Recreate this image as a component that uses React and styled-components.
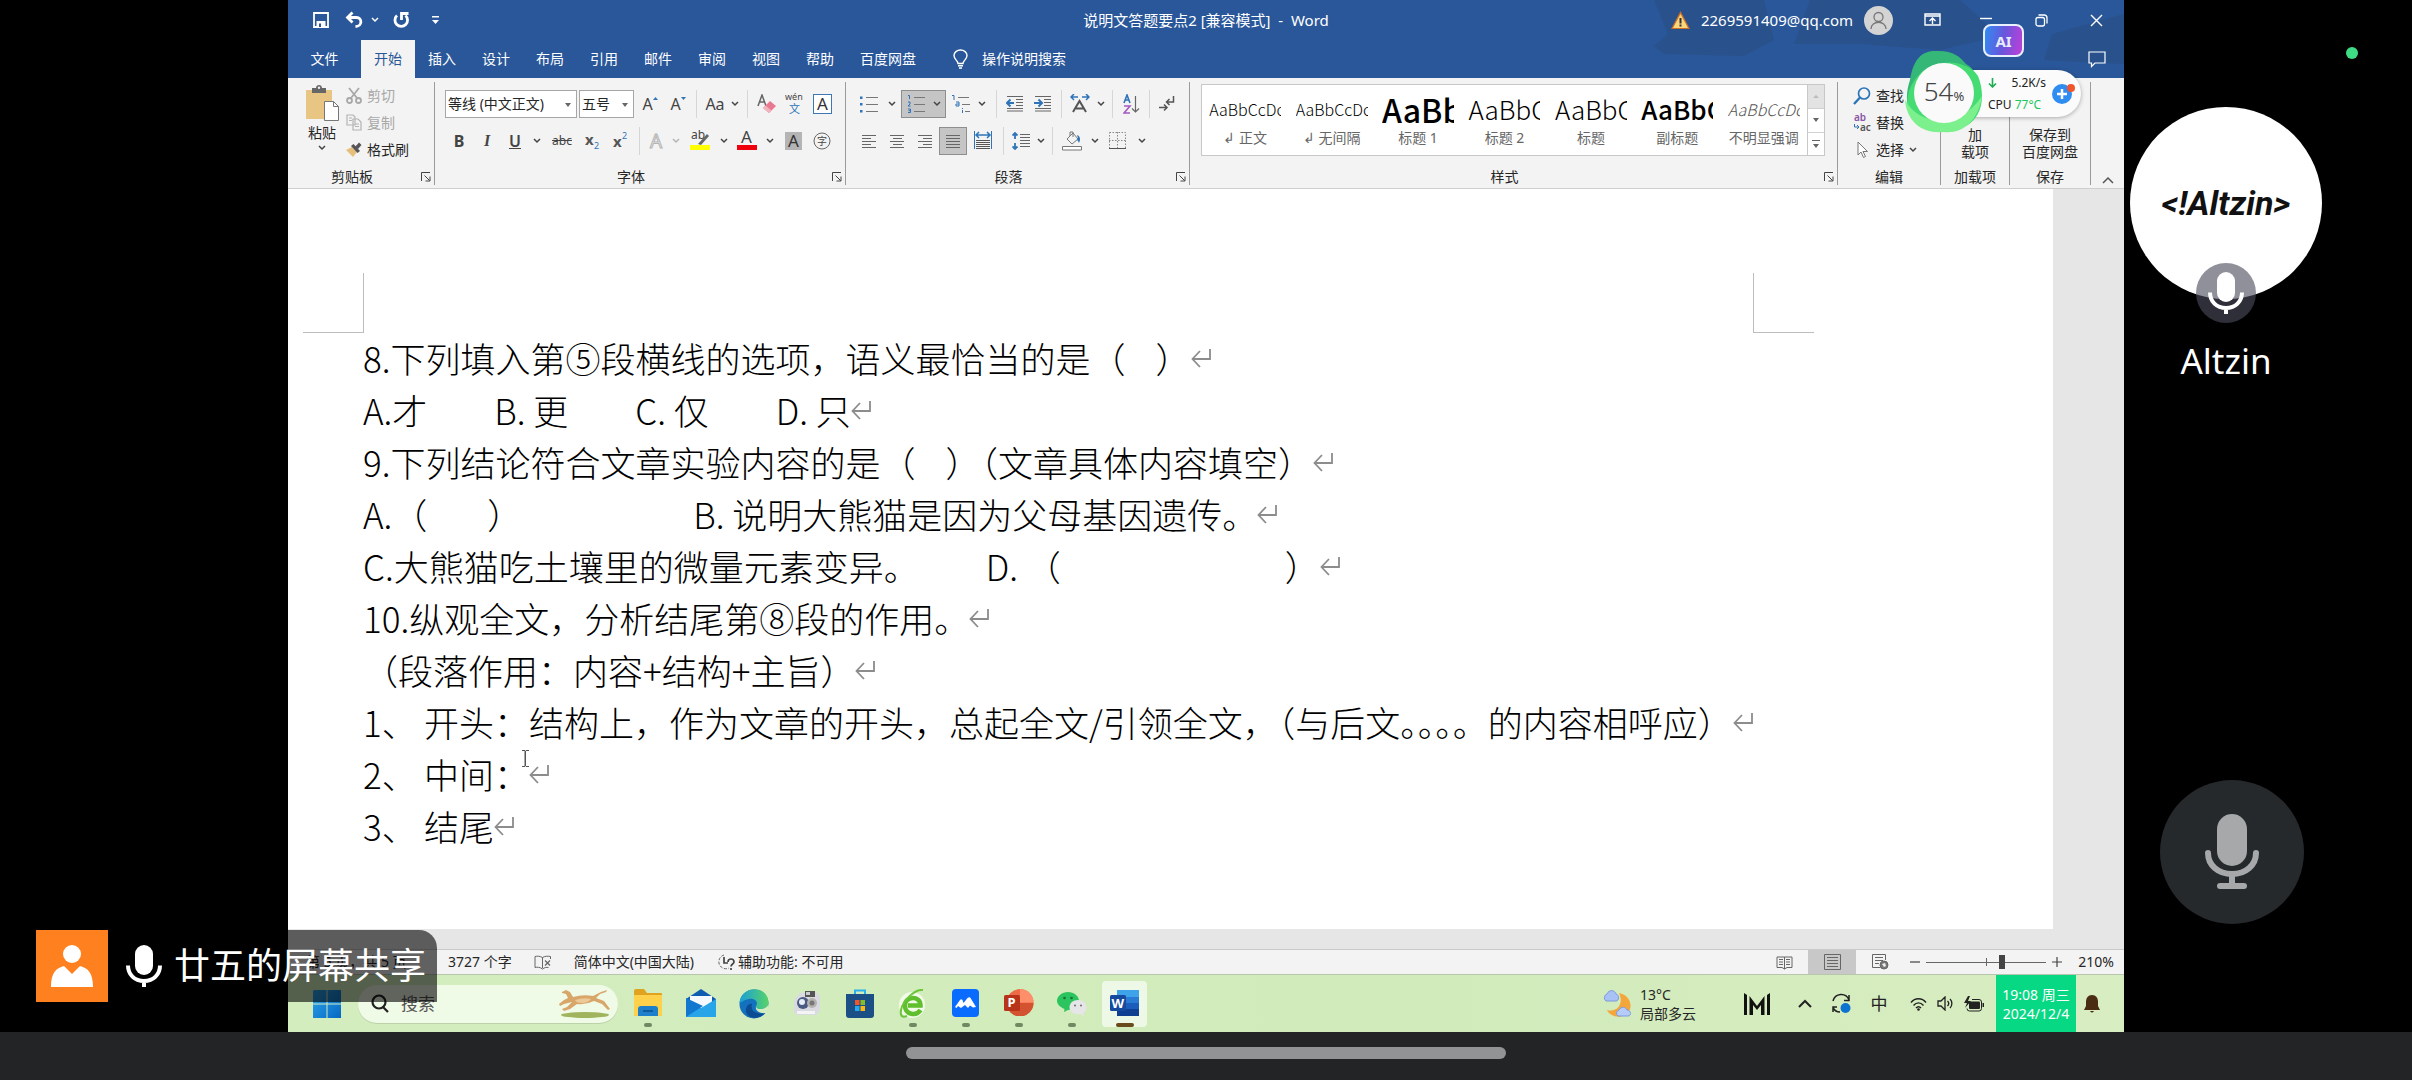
import React from "react";
import styled, { createGlobalStyle, css } from "styled-components";

const GlobalStyle = createGlobalStyle`
  * { box-sizing: border-box; }
  body {
    margin: 0;
    background: #000;
    color: #262626;
    font-family: "Noto Sans", "Noto Sans CJK SC", sans-serif;
    font-size: 14px;
    line-height: 18px;
  }
  button, input, select {
    margin: 0;
    padding: 0;
    border: 0;
    background: none;
    color: inherit;
    font: inherit;
  }
  svg { display: block; flex: none; }
  p, h1, h2 { margin: 0; font: inherit; }
`;

/* ---------- layout ---------- */

const Page = styled.div`
  display: grid;
  grid-template-rows: 1fr 48px;
  height: 100vh;
`;

const Call = styled.main`
  position: relative;
  display: grid;
  grid-template-columns: 288px 1fr 288px;
  min-height: 0;
`;

const Screen = styled.section`
  position: relative;
  grid-column: 2;
  display: flex;
  flex-direction: column;
  min-width: 0;
  background: #e6e6e6;
`;

const NavBar = styled.footer`
  display: flex;
  align-items: flex-start;
  justify-content: center;
  padding-top: 15px;
  background: #222426;
`;

const NavHandle = styled.div`
  width: 600px;
  height: 12px;
  border-radius: 6px;
  background: #929394;
`;

/* ---------- title bar ---------- */

const Header = styled.header`
  position: relative;
  height: 78px;
  background: #2a5799;
  color: #fff;
`;

const Backdrop = styled.svg`
  position: absolute;
  top: 0;
  right: 0;
`;

const TitleRow = styled.div`
  position: relative;
  display: grid;
  grid-template-columns: 1fr auto 1fr;
  align-items: center;
  height: 40px;
`;

const QuickAccess = styled.div`
  display: flex;
  align-items: center;
  padding-left: 18px;
`;

const TitleText = styled.h1`
  font-size: 15px;
  white-space: pre;
`;

const Account = styled.div`
  display: flex;
  align-items: center;
  justify-content: flex-end;
  gap: 11px;
`;

const Email = styled.span`
  font-size: 15px;
`;

const WindowButtons = styled.div`
  display: flex;
  padding-left: 2px;
`;

const TabRow = styled.nav`
  position: relative;
  display: flex;
  align-items: stretch;
  height: 38px;
`;

const Tab = styled.button`
  min-width: ${p => (p.$first ? 73 : 54)}px;
  padding: 0 13px;
  ${p => p.$active && css`
    background: #f3f3f3;
    color: #2a5799;
  `}
`;

const TellMe = styled.button`
  display: flex;
  align-items: center;
  gap: 14px;
  padding: 0 0 0 24px;
`;

const CommentButton = styled.button`
  margin-left: auto;
  padding: 0 18px 0 0;
`;

/* ---------- ribbon ---------- */

const Ribbon = styled.div`
  display: flex;
  height: 111px;
  padding-top: 4px;
  border-bottom: 1px solid #cfcfcf;
  background: #f3f3f3;
`;

const GroupBox = styled.section`
  display: flex;
  flex-direction: column;
  width: ${p => p.$w}px;
  flex: ${p => (p.$grow ? "1 1 0" : "none")};
  height: 103px;
  min-width: 0;
  border-right: 1px solid #9b9b9b;
`;

const GroupBody = styled.div`
  display: flex;
  flex-direction: ${p => (p.$column ? "column" : "row")};
  flex: 1;
  padding: ${p => p.$pad || "0"};
`;

const GroupFoot = styled.div`
  display: grid;
  grid-template-columns: ${p => (p.$launcher ? "1fr 18px" : "1fr")};
  align-items: center;
  height: 16px;
  text-align: center;
  line-height: 16px;

  svg {
    justify-self: end;
    margin-right: 3px;
  }
`;

const FootLabel = styled.h2`
  white-space: nowrap;
`;

const Tool = styled.button`
  display: flex;
  align-items: center;
  justify-content: center;
  gap: ${p => p.$gap || 0}px;
  width: ${p => p.$w || 28}px;
  height: 28px;
  color: #555;
  ${p => p.$on && css`
    border: 1px solid #8e8e8e;
    background: #c5c5c5;
  `}
`;

const ToolRow = styled.div`
  display: flex;
  align-items: center;
  height: 37px;
`;

const Divider = styled.i`
  width: 1px;
  height: 28px;
  margin: 0 4px;
  background: #d6d6d6;
`;

const Combo = styled.label`
  position: relative;
  width: ${p => p.$w}px;
  height: 28px;
  margin-right: 2px;
  border: 1px solid #a6a6a6;
  background: #fff;

  select {
    width: 100%;
    height: 26px;
    padding-left: 2px;
    appearance: none;
    line-height: 26px;
  }
  svg {
    position: absolute;
    top: 12px;
    right: 5px;
    pointer-events: none;
  }
`;

const Glyph = styled.span`
  color: ${p => p.$c || "#444"};
  font-size: ${p => p.$s || 16}px;
  font-weight: ${p => p.$b || 400};
  font-style: ${p => (p.$i ? "italic" : "normal")};
  font-family: ${p => (p.$serif ? '"Liberation Serif", serif' : "inherit")};
  text-decoration: ${p => p.$deco || "none"};
  white-space: nowrap;
`;

const PasteButton = styled.button`
  display: flex;
  flex-direction: column;
  align-items: center;
  width: 48px;
  padding-top: 3px;
  gap: 3px;
`;

const SmallButtons = styled.div`
  display: flex;
  flex-direction: column;
`;

const SmallButton = styled.button`
  display: flex;
  align-items: center;
  gap: 5px;
  height: 27px;
  color: ${p => (p.$off ? "#a8a8a8" : "#262626")};
`;

const StackButton = styled.button`
  align-self: flex-end;
  width: 100%;
  padding-bottom: 9px;
  line-height: 17px;
`;

const Gallery = styled.div`
  display: flex;
  width: 100%;
  height: 72px;
  border: 1px solid #c8c8c8;
  background: #fff;
`;

const StyleItem = styled.button`
  display: flex;
  flex: 1 1 0;
  flex-direction: column;
  align-items: center;
  min-width: 0;
  color: #666;
`;

const Sample = styled.span`
  display: block;
  width: 72px;
  height: 44px;
  overflow: hidden;
  color: ${p => p.$c || "#000"};
  font-family: "Noto Sans CJK SC", sans-serif;
  font-size: ${p => p.$s || 16}px;
  font-weight: ${p => p.$b || 300};
  font-style: ${p => (p.$i ? "italic" : "normal")};
  line-height: 48px;
  text-align: left;
  white-space: nowrap;
`;

const GalleryScroll = styled.div`
  display: grid;
  grid-template-rows: 1fr 1fr 1fr;
  width: 17px;
  border-left: 1px solid #c8c8c8;
`;

const ScrollButton = styled.button`
  display: flex;
  align-items: center;
  justify-content: center;
  border-top: ${p => (p.$off ? 0 : 1)}px solid #d0d0d0;
  background: ${p => (p.$off ? "#e3e3e3" : "#fff")};
`;

const CollapseButton = styled.button`
  display: flex;
  align-items: flex-end;
  justify-content: center;
  width: 33px;
  padding-bottom: 4px;
`;

/* ---------- document ---------- */

const Paper = styled.article`
  position: relative;
  flex: 1;
  min-height: 0;
  margin: 0 71px 0 0;
  padding-top: 84px;
  overflow: hidden;
  background: #fff;
  color: #000;
`;

const CropMarks = styled.div`
  display: flex;
  justify-content: space-between;
  padding: 0 239px 0 15px;
`;

const CropMark = styled.i`
  width: 61px;
  height: 60px;
  border: 0 solid #bdbdbd;
  border-bottom-width: 1px;
  border-left-width: ${p => (p.$right ? 1 : 0)}px;
  border-right-width: ${p => (p.$right ? 0 : 1)}px;
`;

const Line = styled.p`
  display: flex;
  align-items: center;
  height: 52px;
  padding: 0 0 2px 75px;
  font-family: "Noto Sans CJK SC", sans-serif;
  font-size: 35px;
  font-weight: 300;
  line-height: 50px;
  white-space: pre;
`;

const Gap = styled.span`
  width: ${p => p.$w}px;
`;

const Marker = styled.span`
  width: 61px;
`;

const Caret = styled.svg`
  position: absolute;
  top: 561px;
  left: 233px;
`;

const ScrollStrip = styled.div`
  height: 20px;
`;

/* ---------- status bar ---------- */

const StatusBar = styled.div`
  display: flex;
  align-items: center;
  height: 26px;
  padding: 0 10px 0 18px;
  border-top: 1px solid #c9c9c9;
  border-bottom: 1px solid #b9c6ae;
  background: #f3f3f3;
`;

const PageCount = styled.span`
  width: 142px;
`;

const StatusItem = styled.button`
  display: flex;
  align-items: center;
  gap: 2px;
  margin-right: ${p => p.$gap || 22}px;
  white-space: nowrap;
`;

const Views = styled.div`
  display: flex;
  align-self: stretch;
  margin-left: auto;
`;

const ViewButton = styled.button`
  display: flex;
  align-items: center;
  justify-content: center;
  width: 48px;
  background: ${p => (p.$on ? "#c8c8c8" : "transparent")};
`;

const ZoomBox = styled.div`
  display: flex;
  align-items: center;
  gap: 6px;
  padding-left: 6px;
`;

const ZoomSlider = styled.input`
  width: 120px;
  height: 16px;
  appearance: none;
  background:
    linear-gradient(#666, #666) center / 1px 8px no-repeat,
    linear-gradient(#666, #666) center / 100% 1px no-repeat;

  &::-webkit-slider-thumb {
    width: 6px;
    height: 14px;
    appearance: none;
    background: #444;
  }
`;

const ZoomValue = styled.output`
  width: 46px;
  text-align: right;
`;

/* ---------- task bar ---------- */

const TaskBar = styled.div`
  display: flex;
  align-items: center;
  height: 57px;
  padding: 0 22px 0 22px;
  background: linear-gradient(90deg, #d3edbf, #d1ebba 60%, #d8edc2);
`;

const SearchBox = styled.label`
  display: flex;
  align-items: center;
  width: 260px;
  height: 38px;
  margin: 0 3px 0 14px;
  padding: 0 5px 0 13px;
  border-radius: 19px;
  background: #effae7;
  box-shadow: 0 1px 0 #bcd3aa;

  input {
    flex: 1;
    min-width: 0;
    padding-left: 12px;
    font-size: 17px;
    outline: 0;
  }
  input::placeholder { color: #555; }
`;

const AppButton = styled.button`
  display: flex;
  flex-direction: column;
  align-items: center;
  width: 45px;
  height: 46px;
  margin: 0 4px;
  padding-top: 8px;
  border-radius: 4px;
  background: ${p => (p.$on ? "#eef8e6" : "transparent")};

  &::after {
    content: "";
    width: ${p => (p.$on ? 18 : p.$open ? 8 : 0)}px;
    height: 4px;
    margin-top: auto;
    border-radius: 2px;
    background: ${p => (p.$on ? "#6b4a1c" : "#6f8a62")};
  }
`;

const Tray = styled.div`
  display: flex;
  align-items: center;
  align-self: stretch;
  margin-left: auto;
`;

const Weather = styled.button`
  display: flex;
  align-items: center;
  gap: 8px;
  margin-right: 36px;
  line-height: 19px;
  text-align: left;
`;

const TrayButton = styled.button`
  display: flex;
  align-items: center;
  justify-content: center;
  width: ${p => p.$w}px;
  height: 40px;
  color: #222;
  font-size: 17px;
`;

const Clock = styled.button`
  align-self: stretch;
  width: 80px;
  margin: 0 6px 0 8px;
  background: #07d883;
  color: #fff;
  line-height: 19px;
`;

/* ---------- things that float over the shared screen ---------- */

const AiBadge = styled.button`
  position: absolute;
  top: 24px;
  right: 100px;
  width: 41px;
  height: 33px;
  border: 2px solid #e9f0ff;
  border-radius: 8px;
  background: linear-gradient(100deg, #2f8df0, #6a55dc 50%, #c03fd8);
  color: #e4edff;
  font-weight: 700;
  font-size: 15px;
`;

const Monitor = styled.div`
  position: absolute;
  top: 70px;
  right: 43px;
  display: flex;
  align-items: center;
  width: 137px;
  height: 47px;
  padding: 0 6px 0 44px;
  border-radius: 24px;
  background: #fbfbfb;
  box-shadow: 0 1px 4px rgba(0, 0, 0, 0.3);
  color: #222;
  font-size: 12px;
`;

const MonitorRing = styled.div`
  position: absolute;
  top: -20px;
  left: -40px;
`;

const MonitorValue = styled.div`
  position: absolute;
  top: 13px;
  left: 10px;
  display: flex;
  align-items: baseline;
  justify-content: center;
  width: 60px;
  height: 60px;
  border-radius: 30px;
  background: #fafafa;
  color: #444;
  font-size: 26px;
  font-weight: 300;
  line-height: 56px;

  small { font-size: 13px; font-weight: 400; }
`;

const Stats = styled.div`
  flex: 1;
  line-height: 22px;
  white-space: nowrap;

  div {
    display: flex;
    align-items: center;
    justify-content: space-between;
    width: 58px;
  }
  b { color: #1cc75c; font-weight: 400; }
`;

const ShareBanner = styled.div`
  position: absolute;
  bottom: 30px;
  left: 36px;
  display: flex;
  align-items: center;
  height: 72px;
  padding-right: 11px;
  border-radius: 0 18px 0 0;
  background: rgba(0, 0, 0, 0.6);
  color: #fff;
  font-size: 36px;
  line-height: 72px;
`;

const HostBadge = styled.div`
  display: flex;
  align-items: center;
  justify-content: center;
  width: 72px;
  height: 72px;
  margin-right: 18px;
  background: #ff801f;
`;

const ShareText = styled.span`
  padding-left: 12px;
`;

/* ---------- participants ---------- */

const Side = styled.aside`
  display: flex;
  flex-direction: column;
  padding-bottom: 108px;
`;

const CameraDot = styled.i`
  align-self: flex-end;
  width: 12px;
  height: 12px;
  margin: 47px 54px 48px 0;
  border-radius: 6px;
  background: #3ddc84;
`;

const Participant = styled.figure`
  display: flex;
  flex-direction: column;
  align-items: center;
  width: 192px;
  margin: 0 0 0 6px;
  color: #fff;
`;

const Avatar = styled.div`
  position: relative;
  display: flex;
  align-items: center;
  justify-content: center;
  width: 192px;
  height: 192px;
  border-radius: 96px;
  background: #fff;
  color: #111;
  font-family: Roboto, "Noto Sans", sans-serif;
  font-size: 34px;
  font-weight: 700;
  font-style: italic;
`;

const AvatarMic = styled.span`
  position: absolute;
  bottom: -24px;
  left: 66px;
  display: flex;
  align-items: center;
  justify-content: center;
  width: 60px;
  height: 60px;
  border-radius: 30px;
  background: rgba(74, 76, 92, 0.62);
`;

const Name = styled.figcaption`
  margin-top: 34px;
  font-size: 35px;
  line-height: 56px;
`;

const MicButton = styled.button`
  display: flex;
  align-items: center;
  justify-content: center;
  width: 144px;
  height: 144px;
  margin: auto 0 0 36px;
  border-radius: 72px;
  background: #25292b;
`;

/* ---------- icons ---------- */

const BLUE = "#2f74b8";

function Icon({ w = 18, h = w, vb, s = "none", f = "none", sw = 1, children }) {
  return (
    <svg width={w} height={h} viewBox={vb || `0 0 ${w} ${h}`} fill={f} stroke={s} strokeWidth={sw} aria-hidden="true">
      {children}
    </svg>
  );
}

const Chevron = ({ c = "#444", w = 8 }) => (
  <Icon w={w} h={6} vb="0 0 8 6" s={c} sw={1.5}><path d="M1 1l3 3 3-3" /></Icon>
);

const Triangle = ({ c = "#666" }) => <Icon w={6} h={4} f={c}><path d="M0 0h6l-3 4z" /></Icon>;

const Launcher = () => (
  <Icon w={10} s="#444"><path d="M.5 9V.5H9M3.500 3.500l5 5M9 4.500V9H4.500" /></Icon>
);

const Return = () => (
  <Icon w={21} h={20} s="#8c8c8c" sw={1.8}><path d="M19 1v10H2M9 3l-7.500 8 7.500 8" /></Icon>
);

const Mic = ({ w, h, c = "#fff" }) => (
  <Icon w={w} h={h} vb="0 0 36 42" s={c} sw={4}>
    <rect x="9" y="0" width="18" height="30" rx="9" fill={c} stroke="none" />
    <path d="M2 20.500c0 9 6.500 15.500 16 15.500s16-6.500 16-15.500M18 36v6" />
  </Icon>
);

const lines = (rows, x1, x2, y0 = 3, step = 4) =>
  Array.from({ length: rows }, (_, i) => `M${x1} ${y0 + i * step}H${x2}`).join("");

const Save = () => (
  <Icon w={16} s="#fff" sw={1.8}>
    <path d="M1 1h14v14H1z" /><path d="M3.500 9h9v6h-9z" fill="#fff" stroke="none" /><path d="M6 11.500h2V15H6z" fill="#2a5799" stroke="none" />
  </Icon>
);
const Undo = () => (
  <Icon w={18} s="#fff" sw={2.8}><path d="M7.500 1.500L2.500 6.500l5 5M3 6.500h8.500c6 0 6 9-1 9" /></Icon>
);
const Redo = () => (
  <Icon w={18} s="#fff" sw={2.8}><path d="M5 4.500a6.300 6.300 0 1 0 8.500 0M9.500 9V2.500H16.500" /></Icon>
);
const Customize = () => (
  <Icon w={7} h={8} f="#fff"><path d="M0 0h7v1.500H0zM0 4h7L3.500 8z" /></Icon>
);
const Warning = () => (
  <Icon w={19} h={18} f="#f0b040"><path d="M9.500 0L19 18H0z" fill="#c86f28" /><path d="M9.500 3L17 17H2z" fill="#fbd67a" /><path d="M8.500 7h2v5.500h-2zM8.500 13.500h2v2h-2z" fill="#333" /></Icon>
);
const User = () => (
  <Icon w={29} f="#d4d4d4"><circle cx="14.500" cy="14.500" r="14.500" /><circle cx="14.500" cy="11" r="4.500" stroke="#777" strokeWidth="1.300" /><path d="M7 23c0-9 15-9 15 0" stroke="#777" strokeWidth="1.300" /></Icon>
);
const RibbonToggle = () => (
  <Icon w={17} h={14} s="#fff" sw={1.4}><path d="M1 1h15v11H1zM1 3h15M8.500 11V5M5.500 8l3-3 3 3" /></Icon>
);
const Minimize = () => <Icon w={12} h={12} s="#fff" sw={1.4}><path d="M0 4.500h12" /></Icon>;
const Restore = () => (
  <Icon w={13} s="#fff" sw={1.3}><rect x="1" y="3.500" width="8.500" height="8.500" rx="2" /><path d="M3.500 1H9a3 3 0 0 1 3 3v5.500" /></Icon>
);
const Close = () => <Icon w={13} s="#fff" sw={1.4}><path d="M1 1l11 11M12 1L1 12" /></Icon>;
const Comment = () => <Icon w={18} h={17} s="#fff" sw={1.2}><path d="M1 1h16v11H7l-3.500 3.500V12H1z" /></Icon>;
const Bulb = () => (
  <Icon w={15} h={20} s="#fff" sw={1.4}><path d="M5 14.500c0-3-4-4-4-8a6.500 5.500 0 0 1 13 0c0 4-4 5-4 8zM5 16.700h5M6 19h3" /></Icon>
);

const Paste = () => (
  <Icon w={34} h={36} f="#e9c583">
    <path d="M1 5h26v29H1z" /><path d="M7 3h4c0-4 6-4 6 0h4v5H7z" fill="#666" /><circle cx="14" cy="2.800" r="1.200" fill="#eee" />
    <path d="M19.500 16.500h9l5 5v14h-14z" fill="#fff" stroke="#777" /><path d="M28.500 16.500v5h5" stroke="#777" fill="none" />
  </Icon>
);
const Cut = () => (
  <Icon w={16} h={17} s="#a8a8a8" sw={1.8}><path d="M3 1l8 10M13 1L5 11" /><circle cx="3.500" cy="13.500" r="2.500" /><circle cx="12.500" cy="13.500" r="2.500" /></Icon>
);
const Copy = () => (
  <Icon w={16} h={17} s="#b4b4b4" sw={1.2}><path d="M1 1h6l2 2v8H1zM7 5h5l3 3v8H7zM3 4h3M3 6.500h3M9 10h4M9 12.500h4" /></Icon>
);
const Brush = () => (
  <Icon w={16} h={16}><path d="M0 8l6-3 5 5-4 5z" fill="#e6bf7d" /><path d="M5 4l2.500-2L14 9l-2.500 2z" fill="#555" /><path d="M9 5l4-4.500L15.500 3 12 7z" fill="#555" /></Icon>
);
const Eraser = () => (
  <Icon w={19} h={20}><path d="M1 12L5 1l4 11M2.500 8h5" stroke="#666" strokeWidth="1.500" /><path d="M6 14l7-7 6 5-7 7z" fill="#e8798e" /><path d="M6 14l2.500-2.500 6 5L12 19z" fill="#f2b3be" /></Icon>
);
const Bullets = () => (
  <Icon w={18} h={18} s="#777"><path d="M6 2.500h12M6 9.500h12M6 16.500h12" /><path d="M0 1.500h2.500v2.500H0zM0 8h2.500v2.500H0zM0 15h2.500v2.500H0z" fill={BLUE} stroke="none" /></Icon>
);
const Numbers = () => (
  <Icon w={18} h={18} s="#777"><path d="M7 2.500h11M7 9.500h11M7 16.500h11" /><path d="M1 .5h1.500V4M1 7h2v2l-2 2h2.500M1 14h2.500v3.500H1M1.500 15.700h2" stroke={BLUE} /></Icon>
);
const Multilevel = () => (
  <Icon w={19} h={18} s="#777"><path d="M6 2.500h11M10 9.500h8M13 16.500h5" /><path d="M0 .5h2V5M4 7h3v4H4V9h3M10.500 13v1M10.500 15v3" stroke={BLUE} /></Icon>
);
const Outdent = ({ right }) => (
  <Icon w={18} h={17} s="#666"><path d="M1 1.500h16M10 4.500h7M10 7.500h7M10 10.500h7M1 13.500h16M1 16h16" /><path d={right ? "M0 8h7M4.500 4.500L8 8l-3.500 3.500" : "M1 8h7M4.500 4.500L1 8l3.500 3.500"} stroke={BLUE} strokeWidth="2" /></Icon>
);
const CharScale = () => (
  <Icon w={20} h={19}><path d="M3 18l6.500-11L16 18M6 14.500h7.500" stroke="#555" strokeWidth="2" /><path d="M1 3h7M4 0L1 3l3 3M12 3h7M16 0l3 3-3 3" stroke={BLUE} strokeWidth="1.500" /></Icon>
);
const Sort = () => (
  <Icon w={17} h={20} sw={1.6}><path d="M1 9l3-8 3 8M2 6h4" stroke={BLUE} /><path d="M1 12h6l-6 7h6" stroke="#a45bc0" /><path d="M12.500 2v16M9 14.500l3.500 3.500 3.500-3.500" stroke="#666" strokeWidth="1.200" /></Icon>
);
const Marks = () => (
  <Icon w={16} h={17} s="#555" sw={1.5}><path d="M14.500 1v6H8M10.500 4L7.500 7l3 3M0 12.500h8M5 9.500l3 3-3 3" /></Icon>
);
const Align = ({ kind }) => {
  const short = { left: "M1 4.500h9M1 10.500h9", center: "M4 4.500h9M4 10.500h9", right: "M6 4.500h9M6 10.500h9", full: "M1 4.500h14M1 10.500h14" }[kind];
  return <Icon w={16} h={14} s="#666"><path d={`M1 1.500h14M1 7.500h14M1 13.500h14${short}`} /></Icon>;
};
const Distribute = () => (
  <Icon w={18} h={19} s="#555"><path d="M.5 0v18M17.500 0v18" stroke={BLUE} /><path d="M2 4h14M5 1L2 4l3 3M13 1l3 3-3 3" stroke={BLUE} strokeWidth="1.500" /><path d={lines(5, 2, 16, 9.5, 2)} /></Icon>
);
const Spacing = () => (
  <Icon w={18} h={18} s="#666"><path d={lines(5, 8, 18, 2.5, 3)} /><path d="M3 1v6M.5 3.500L3 1l2.500 2.500M3 17v-6M.5 14.500L3 17l2.500-2.500" stroke={BLUE} strokeWidth="1.800" /></Icon>
);
const Bucket = () => (
  <Icon w={20} h={20} s="#777"><path d="M5 8l6-6 5 6-6 5zM8 5V1h3v5" /><path d="M15 4c3 1 4 4 2 8-1-3-3-3-1-5z" fill={BLUE} stroke="none" /><path d="M.5 15.500h19v3.500H.5z" fill="#fff" /></Icon>
);
const Borders = () => (
  <Icon w={17} h={17} s="#888"><path d="M.5.5h16v16H.5zM8.500 0v17M0 8.500h17" strokeDasharray="1.500 1.500" /><path d="M0 16.500h17" stroke="#555" /></Icon>
);
const Find = () => (
  <Icon w={18} s={BLUE} sw={1.7}><circle cx="11" cy="6.500" r="5.500" /><path d="M7 10.500L1 17" strokeWidth="2.400" /></Icon>
);
const Replace = () => (
  <Icon w={18} h={20}>
    <text x="1" y="8" fontSize="10" fill="#8a55a5" fontFamily="Noto Sans" fontWeight="600">ab</text>
    <text x="7" y="18" fontSize="10" fill="#555" fontFamily="Noto Sans" fontWeight="600">ac</text>
    <path d="M1.500 11v3h4M4 12l2 2-2 2" stroke={BLUE} />
  </Icon>
);
const Arrow = () => <Icon w={18} h={18} s="#777" f="#fff"><path d="M5 1v13l3-3 2.500 5.500 2-1L10 10.500h4.500z" /></Icon>;

const Proof = () => (
  <Icon w={18} h={15} s="#666"><path d="M8.500 13V2.500C6 1 3 1 1 1.500v11c2-.5 5-.5 7.500 1.500 2-1.500 4-2 6-1.500M8.500 2.500C11 1 14 1 16.500 1.500V4" /><path d="M11 5.500l5 5M16 5.500l-5 5" strokeWidth="1.300" /></Icon>
);
const Access = () => (
  <Icon w={18} h={17} s="#666"><path d="M6 1a7 7 0 1 0 5 13" strokeDasharray="3 1.500" /><path d="M6 3v6h4M10 8c0-4 6-4 6 0 0 2-3 2-3 4.500M13 14v2" stroke="#444" strokeWidth="1.700" /></Icon>
);
const ReadView = () => (
  <Icon w={17} h={15} s="#666"><path d="M8.500 14V2H1v10.500h5zM8.500 2H16v10.500h-5l-2.500 1.500M3 4.500h4M3 7h4M3 9.500h4M10 4.500h4M10 7h4M10 9.500h4" /></Icon>
);
const PrintView = () => <Icon w={17} h={16} s="#666"><path d={`M.5.5h16v15H.5z${lines(4, 3, 14, 3.5, 3)}`} /></Icon>;
const WebView = () => (
  <Icon w={17} h={16} s="#666"><path d="M8 13.500H.5v-13h13V6M3 3.500h8M3 6.500h8M3 9.500h4" /><circle cx="12" cy="11" r="4" fill="#777" /><path d="M10 10l3-1 1 3-2 1z" fill="#eee" stroke="none" /></Icon>
);

const Windows = () => (
  <Icon w={28} h={28}>
    <defs><linearGradient id="win" x1="0" y1="0" x2="1" y2="1"><stop offset="0" stopColor="#2da7ea" /><stop offset="1" stopColor="#0667c4" /></linearGradient></defs>
    <path d="M1 0h12.500v13.500H0V1zM14.500 0H28v13.500H14.500zM0 14.500h13.500V28H0zM14.500 14.500H28V28H14.500z" fill="url(#win)" />
  </Icon>
);
const SearchGlass = () => <Icon w={18} h={19} s="#222" sw={2.2}><circle cx="8" cy="8" r="6.500" /><path d="M12 13l5 5" /></Icon>;
const Cheetah = () => (
  <Icon w={54} h={28}>
    <ellipse cx="26" cy="25" rx="24" ry="3" fill="#9fb45c" />
    <path d="M3 2l4-2 4 2 3 5q10-3 20-1l8-4 6-2-1 2-6 2-4 4 8 3 6 8-2 1-6-6-8-3q-8 4-17 3l-7 5-6 2-2-2 5-2 5-5-8 2-4 2-1-2 5-4 4-2-2-4-4-1z" fill="#d9a66a" />
    <path d="M16 10q9-3 16-1-3 4-9 4t-7-3z" fill="#edc899" />
  </Icon>
);
const Folder = () => (
  <Icon w={30} h={27}><path d="M1 2q0-2 2-2h8l3 4h14q1 0 1 1v20q0 2-2 2H3q-2 0-2-2z" fill="#e0a320" /><path d="M1 6h28v19q0 2-2 2H3q-2 0-2-2z" fill="#ffd04a" /><path d="M5 20q0-3 3-3h14q3 0 3 3v7H5z" fill="#1d7fcb" /><path d="M10 22h10" stroke="#0c5a9c" strokeWidth="2" /></Icon>
);
const Mail = () => (
  <Icon w={30} h={28}><path d="M0 10L15 0l15 10v18H0z" fill="#0f5db0" /><path d="M4 7h22v13H4z" fill="#f4f9ff" /><path d="M0 10l15 9 15-9v18H0z" fill="#28a5e8" /><path d="M0 28l17-11L0 9z" fill="#1177cf" /></Icon>
);
const Edge = () => (
  <Icon w={30} h={30}>
    <defs><linearGradient id="edge" x1="0" y1="0" x2="1" y2="0"><stop offset="0" stopColor="#1a9fd8" /><stop offset="1" stopColor="#57d26a" /></linearGradient></defs>
    <circle cx="15" cy="15" r="14.500" fill="#1471bd" />
    <path d="M.5 14C2-4 29-4 29.500 13c0 5-4 7-8 7s-5-2-4-4c2-4-3-7-8-6S1 14 .5 14z" fill="url(#edge)" />
    <path d="M13 15c-2 6 3 11 13 9-6 7-17 6-19-1-1-5 3-9 6-8z" fill="#0c4c93" />
    <path d="M17.500 16c-1 2 0 4 4 4s7-2 8-5l.5 5-3 4c-7 1-12-3-9.500-8z" fill="#d3edbf" />
  </Icon>
);
const Camera = () => (
  <Icon w={28} h={28}><path d="M1 11l6-7 16-1 4 4v15l-4 4H4l-3-3z" fill="#d9dbe0" /><path d="M12 2h10v6H12z" fill="#555" /><path d="M13 3h4v3h-4z" fill="#c9ccd2" /><circle cx="10" cy="14" r="6" fill="#4a5a82" /><circle cx="9" cy="13" r="3" fill="#e7edf7" /><circle cx="19" cy="14" r="5" fill="#b5b2b0" /><circle cx="19" cy="14" r="2.500" fill="#777" /><path d="M4 22h18v3H4z" fill="#f4f4f6" /></Icon>
);
const Store = () => (
  <Icon w={28} h={29}><path d="M9 6V1.500h10V6" stroke="#2bb0ee" strokeWidth="2" /><path d="M0 5h28v21q0 3-3 3H3q-3 0-3-3z" fill="#1c4f86" /><path d="M9 11h4.500v5H9z" fill="#f2552c" /><path d="M14.500 11H19v5h-4.500z" fill="#83bd2a" /><path d="M9 17h4.500v5H9z" fill="#25a9ef" /><path d="M14.500 17H19v5h-4.500z" fill="#fdb813" /></Icon>
);
const GreenE = () => (
  <Icon w={28} h={30}>
    <circle cx="13" cy="16" r="13" fill="#f2fbe9" />
    <path d="M21.500 21c-4 6.500-15.500 5-15.500-4.500S21.500 6 21.500 16.500H9" stroke="#5fbf2c" strokeWidth="4.500" />
    <path d="M24 1c-8-1-20 10-22 20-1 6 1 8 6 6" stroke="#6cc53a" strokeWidth="2" />
  </Icon>
);
const Meeting = () => (
  <Icon w={27} h={28}><rect width="27" height="28" rx="4" fill="#0a6bff" /><path d="M3 18l5-7q1-1.500 2.500 0l1 3 4-5q2-1.500 3 0l5.500 9-3 .5-3-2-2 2.500-3-3-4 3-3-2-1.500 2z" fill="#fff" /></Icon>
);
const PowerPoint = () => (
  <Icon w={30} h={27}><circle cx="16" cy="13.500" r="13.500" fill="#ed6c47" /><path d="M16 0a13.500 13.500 0 0 1 13.500 13.500H16z" fill="#ff8f6b" /><path d="M2.500 14h27a13.500 13.500 0 0 1-27 0z" fill="#d35230" /><rect y="6" width="16" height="16" rx="1.500" fill="#b7331a" /><text x="3.500" y="18" fontSize="13" fontWeight="700" fontFamily="Noto Sans" fill="#fff">P</text></Icon>
);
const WeChat = () => (
  <Icon w={30} h={28}><path d="M11 3c6 0 11 4 11 9s-5 9-11 9l-4 2 .5-3C3 18 0 15 0 12c0-5 5-9 11-9z" fill="#2bc45e" /><circle cx="7.500" cy="9" r="1.300" fill="#17713a" /><circle cx="14.500" cy="9" r="1.300" fill="#17713a" /><path d="M21 11c5 0 8.500 3.500 8.500 7.500 0 2-1 4-3 5.500v3l-3-2c-6 1-11-2-11-6.500S16 11 21 11z" fill="#e6e6e8" /><circle cx="18" cy="16.500" r="1.100" fill="#777" /><circle cx="24" cy="16.500" r="1.100" fill="#777" /></Icon>
);
const Word = () => (
  <Icon w={29} h={28}><path d="M7 1h22v7H7z" fill="#3fa3ea" /><path d="M7 8h22v6H7z" fill="#2a7bd3" /><path d="M7 14h22v6H7z" fill="#1a5dbb" /><path d="M7 20h22v7H7z" fill="#103f91" /><rect y="6" width="16" height="16" rx="1.500" fill="#164a9e" /><text x="1.500" y="18.500" fontSize="13" fontWeight="700" fontFamily="Noto Sans" fill="#fff">W</text></Icon>
);
const Moon = () => (
  <Icon w={30} h={28}><path d="M17 3c13 2 16 19 4 23-7 2-14-1-16-6 11 3 17-7 12-17z" fill="#f5a63a" /><path d="M4 11a4 4 0 0 1 1-7c2-5 8-4 9 0 4 1 3 7 0 7z" fill="#a9c2f5" stroke="#7d9be0" /><path d="M16 26a4 3.500 0 0 1 1-6c2-4 7-3 8 0 4 0 5 6 1 6z" fill="#b5cbf8" stroke="#7d9be0" /></Icon>
);
const Bars = () => <Icon w={26} h={22} f="#111"><path d="M0 0l3 2v20H0zM5.500 3L13 13l7.500-10v19h-3.500v-10L13 17l-4-5v10H5.500zM23 2l3-2v22h-3z" /></Icon>;
const Sync = () => (
  <Icon w={20} h={21} s="#222" sw={1.5}><path d="M2 8c2-8 13-9 16-1M18 2v5.500h-5M2 19v-5h4M2 14c1 3 4 5 7 5" /><circle cx="14.500" cy="15" r="5" fill="#0c74d0" stroke="none" /></Icon>
);
const Wifi = () => <Icon w={17} h={14} s="#222" sw={1.4}><path d="M1 5.500c4-5 11-5 15 0M3.500 8.500c3-3.500 7-3.500 10 0M6 11c1.500-1.700 3.500-1.700 5 0" /><circle cx="8.500" cy="12.500" r="1.300" fill="#222" stroke="none" /></Icon>;
const Speaker = () => <Icon w={18} h={15} s="#222" sw={1.3}><path d="M1 5h3l4-4v13l-4-4H1zM10.500 5c1.500 1.500 1.500 3.500 0 5M13 3c2.500 2.500 2.500 6.500 0 9" /></Icon>;
const Battery = () => <Icon w={20} h={16} f="#222"><rect x="5" y="5.500" width="11" height="7.500" rx="1" /><path d="M18.500 7H20v4h-1.500zM4 0L0 7h3L1 12l6-7H4l2-5z" /><path d="M8 3.500h7a2.500 2.500 0 0 1 2.500 2.500v6.500a2.500 2.500 0 0 1-2.500 2.500H5.500a2.500 2.500 0 0 1-2.500-2.500" stroke="#222" fill="none" /></Icon>;
const Bell = () => <Icon w={16} h={18} f="#4a2c12"><path d="M8 0c4 0 6 3 6 7v4l2 4H0l2-4V7c0-4 2-7 6-7zM6 16h4q-2 3-4 0z" /></Icon>;
const Person = () => (
  <Icon w={42} h={42} f="#fff"><ellipse cx="21" cy="9" rx="9" ry="9" /><path d="M0 42c0-14 5-19 13-21l8 8 8-8c8 2 13 7 13 21z" /></Icon>
);
const BigMic = () => (
  <Icon w={54} h={76} s="#a6a8aa" sw={6}>
    <rect x="12" y="0" width="30" height="52" rx="15" fill="#a6a8aa" stroke="none" />
    <path d="M3 39c0 12 10 21 24 21s24-9 24-21M27 61v10M15 72h24" strokeLinecap="round" />
  </Icon>
);
const Ring = () => (
  <Icon w={80} h={84}>
    <path d="M6 30C10 6 20 0 34 1c16 0 22 6 28 13 18 10 14 38 8 54L20 74C2 66 0 48 6 30z" fill="#35b877" />
    <path d="M14 26C28 8 62 8 74 26c8 20 4 42-12 50C36 84 10 76 4 58c-2-12 2-24 10-32z" fill="#45dc74" />
    <path d="M1 50c14 26 55 30 77-4-4 26-20 38-38 36C18 84 3 72 1 50z" fill="#7cf08c" />
  </Icon>
);

/* ---------- content ---------- */

const tabs = ["文件", "开始", "插入", "设计", "布局", "引用", "邮件", "审阅", "视图", "帮助", "百度网盘"];

const styleItems = [
  { name: "↲ 正文", text: "AaBbCcDc" },
  { name: "↲ 无间隔", text: "AaBbCcDc" },
  { name: "标题 1", text: "AaBb", s: 32, b: 500 },
  { name: "标题 2", text: "AaBbCc", s: 26 },
  { name: "标题", text: "AaBbCc", s: 26 },
  { name: "副标题", text: "AaBbCc", s: 26, b: 500 },
  { name: "不明显强调", text: "AaBbCcDc", i: true, c: "#555" },
];

// a number in a line is a blank of that width
const bodyLines = [
  ["8.下列填入第⑤段横线的选项，语义最恰当的是（", 30, "）"],
  ["A.才", 67, "B. 更", 67, "C. 仅", 67, "D. 只"],
  ["9.下列结论符合文章实验内容的是（", 30, "）（文章具体内容填空）"],
  ["A.（", 60, "）", 171, "B. 说明大熊猫是因为父母基因遗传。"],
  ["C.大熊猫吃土壤里的微量元素变异。", 67, "D. （", 224, "）"],
  ["10.纵观全文，分析结尾第⑧段的作用。"],
  ["（段落作用：内容+结构+主旨）"],
];

const listLines = [
  "开头：结构上，作为文章的开头，总起全文/引领全文，（与后文。。。。的内容相呼应）",
  "中间：",
  "结尾",
];

const apps = [
  { name: "文件资源管理器", icon: <Folder />, open: true },
  { name: "邮件", icon: <Mail /> },
  { name: "Edge", icon: <Edge /> },
  { name: "相机", icon: <Camera /> },
  { name: "商店", icon: <Store /> },
  { name: "浏览器", icon: <GreenE />, open: true },
  { name: "会议", icon: <Meeting />, open: true },
  { name: "PowerPoint", icon: <PowerPoint />, open: true },
  { name: "微信", icon: <WeChat />, open: true },
  { name: "Word", icon: <Word />, on: true },
];

function Group({ label, launcher, w, grow, column, pad, children }) {
  return (
    <GroupBox $w={w} $grow={grow}>
      <GroupBody $column={column} $pad={pad}>{children}</GroupBody>
      <GroupFoot $launcher={launcher}>
        <FootLabel>{label}</FootLabel>
        {launcher && <Launcher />}
      </GroupFoot>
    </GroupBox>
  );
}

function TitleBar() {
  return (
    <Header>
      <Backdrop width="480" height="78" viewBox="0 0 480 78" aria-hidden="true">
        <path d="M10 0h110l10 40-30 16-80-2-10-8 14-12zM150 44l16-44h150l40 36-60 14-80-6zM400 60l8-26 72-20v50z" fill="#2a4f86" opacity="0.6" />
      </Backdrop>
      <TitleRow>
        <QuickAccess>
          <Tool $w={30}><Save /></Tool>
          <Tool $w={52} $gap={8}><Undo /><Chevron c="#fff" /></Tool>
          <Tool $w={26}><Redo /></Tool>
          <Tool $w={42}><Customize /></Tool>
        </QuickAccess>
        <TitleText>{"说明文答题要点2 [兼容模式]  -  Word"}</TitleText>
        <Account>
          <Warning />
          <Email>2269591409@qq.com</Email>
          <User />
          <WindowButtons>
            <Tool $w={52}><RibbonToggle /></Tool>
            <Tool $w={56}><Minimize /></Tool>
            <Tool $w={54}><Restore /></Tool>
            <Tool $w={56}><Close /></Tool>
          </WindowButtons>
        </Account>
      </TitleRow>
      <TabRow>
        {tabs.map((t, i) => (
          <Tab key={t} $first={i === 0} $active={i === 1}>{t}</Tab>
        ))}
        <TellMe><Bulb />操作说明搜索</TellMe>
        <CommentButton aria-label="批注"><Comment /></CommentButton>
      </TabRow>
      <AiBadge>AI</AiBadge>
    </Header>
  );
}

function FontGroup() {
  return (
    <Group label="字体" launcher w={411} column pad="3px 0 0 10px">
      <ToolRow>
        <Combo $w={132} aria-label="字体">
          <select><option>等线 (中文正文)</option></select><Triangle />
        </Combo>
        <Combo $w={55} aria-label="字号">
          <select><option>五号</option></select><Triangle />
        </Combo>
        <Tool><Glyph>A</Glyph><Icon w={5} h={14} f={BLUE}><path d="M0 3h5L2.500 0z" /></Icon></Tool>
        <Tool><Glyph>A</Glyph><Icon w={5} h={14} f={BLUE}><path d="M0 0h5L2.500 3z" /></Icon></Tool>
        <Divider />
        <Tool $w={42} $gap={6}><Glyph>Aa</Glyph><Chevron /></Tool>
        <Divider />
        <Tool><Eraser /></Tool>
        <Tool>
          <Icon w={18} h={22}>
            <text x="0" y="7" fontSize="9" fill="#444" fontFamily="Noto Sans">wén</text>
            <text x="4" y="20" fontSize="11" fill={BLUE} fontFamily="Noto Sans CJK SC">文</text>
          </Icon>
        </Tool>
        <Tool>
          <Icon w={19} h={20} s="#3b78b5">
            <rect x="0.500" y="0.500" width="18" height="19" fill="#fff" />
            <text x="4" y="16" fontSize="17" stroke="none" fill="#333" fontFamily="Noto Sans">A</text>
          </Icon>
        </Tool>
      </ToolRow>
      <ToolRow>
        <Tool><Glyph $b={700}>B</Glyph></Tool>
        <Tool><Glyph $serif $b={700} $i>I</Glyph></Tool>
        <Tool><Glyph $b={600} $deco="underline">U</Glyph></Tool>
        <Tool $w={16}><Chevron /></Tool>
        <Tool $w={34}><Glyph $s={12} $deco="line-through">abc</Glyph></Tool>
        <Tool>
          <Icon w={16} h={20}><text x="0" y="14" fontSize="15" fontWeight="700" fill="#555" fontFamily="Noto Sans">x</text><text x="9" y="18" fontSize="9" fill={BLUE} fontFamily="Noto Sans">2</text></Icon>
        </Tool>
        <Tool>
          <Icon w={16} h={20}><text x="0" y="16" fontSize="15" fontWeight="700" fill="#555" fontFamily="Noto Sans">x</text><text x="9" y="8" fontSize="9" fill={BLUE} fontFamily="Noto Sans">2</text></Icon>
        </Tool>
        <Divider />
        <Tool $w={26}><Icon w={16} h={18} s="#b5b5b5"><text x="1" y="16" fontSize="19" fontFamily="Noto Sans">A</text></Icon></Tool>
        <Tool $w={12}><Chevron c="#b5b5b5" /></Tool>
        <Tool $w={36}>
          <Icon w={20} h={21}><text x="1" y="9" fontSize="12" fill="#444" fontFamily="Noto Sans">ab</text><path d="M8 14l9-10 2 2-8 9z" fill="#666" /><path d="M0 15h20v5H0z" fill="#ffff00" /></Icon>
        </Tool>
        <Tool $w={12}><Chevron /></Tool>
        <Tool $w={34}>
          <Icon w={20} h={21}><text x="4" y="13" fontSize="17" fill="#444" fontFamily="Noto Sans">A</text><path d="M0 15h20v5H0z" fill="#f0000c" /></Icon>
        </Tool>
        <Tool $w={12}><Chevron /></Tool>
        <Tool $w={34}>
          <Icon w={17} h={18}><path d="M0 0h17v18H0z" fill="#b4b4b4" /><text x="3" y="15" fontSize="17" fill="#333" fontFamily="Noto Sans">A</text></Icon>
        </Tool>
        <Tool $w={24}>
          <Icon w={18} h={18} s="#666"><circle cx="9" cy="9" r="8" /><text x="4" y="13" fontSize="10" fill="#444" stroke="none" fontFamily="Noto Sans CJK SC">字</text></Icon>
        </Tool>
      </ToolRow>
    </Group>
  );
}

function ParagraphGroup() {
  return (
    <Group label="段落" launcher w={344} column pad="3px 0 0 9px">
      <ToolRow>
        <Tool $w={46} $gap={10}><Bullets /><Chevron /></Tool>
        <Tool $w={45} $gap={8} $on><Numbers /><Chevron /></Tool>
        <Tool $w={46} $gap={7}><Multilevel /><Chevron /></Tool>
        <Divider />
        <Tool><Outdent /></Tool>
        <Tool><Outdent right /></Tool>
        <Divider />
        <Tool $w={42} $gap={7}><CharScale /><Chevron /></Tool>
        <Divider />
        <Tool><Sort /></Tool>
        <Divider />
        <Tool $w={26}><Marks /></Tool>
      </ToolRow>
      <ToolRow>
        <Tool><Align kind="left" /></Tool>
        <Tool><Align kind="center" /></Tool>
        <Tool><Align kind="right" /></Tool>
        <Tool $on><Align kind="full" /></Tool>
        <Tool $w={32}><Distribute /></Tool>
        <Divider />
        <Tool $w={40} $gap={7}><Spacing /><Chevron /></Tool>
        <Divider />
        <Tool $w={46} $gap={9}><Bucket /><Chevron /></Tool>
        <Tool $w={48} $gap={12}><Borders /><Chevron /></Tool>
      </ToolRow>
    </Group>
  );
}

function StylesGroup() {
  return (
    <Group label="样式" launcher grow pad="2px 12px 0 11px">
      <Gallery>
        {styleItems.map(item => (
          <StyleItem key={item.name}>
            <Sample $s={item.s} $b={item.b} $i={item.i} $c={item.c}>{item.text}</Sample>
            {item.name}
          </StyleItem>
        ))}
        <GalleryScroll>
          <ScrollButton $off aria-label="上一行"><Icon w={6} h={3} f="#bbb"><path d="M0 3h6L3 0z" /></Icon></ScrollButton>
          <ScrollButton aria-label="下一行"><Triangle /></ScrollButton>
          <ScrollButton aria-label="其他"><Icon w={8} h={8} f="#666"><path d="M0 0h8v1H0zM1 4h6L4 8z" /></Icon></ScrollButton>
        </GalleryScroll>
      </Gallery>
    </Group>
  );
}

function RibbonBar() {
  return (
    <Ribbon>
      <Group label="剪贴板" launcher w={147} pad="0 0 0 10px">
        <PasteButton><Paste />粘贴<Chevron /></PasteButton>
        <SmallButtons>
          <SmallButton $off><Cut />剪切</SmallButton>
          <SmallButton $off><Copy />复制</SmallButton>
          <SmallButton><Brush />格式刷</SmallButton>
        </SmallButtons>
      </Group>
      <FontGroup />
      <ParagraphGroup />
      <StylesGroup />
      <Group label="编辑" w={103} pad="0 0 0 15px">
        <SmallButtons>
          <SmallButton><Find />查找</SmallButton>
          <SmallButton><Replace />替换</SmallButton>
          <SmallButton><Arrow />选择<Chevron /></SmallButton>
        </SmallButtons>
      </Group>
      <Group label="加载项" w={69}>
        <StackButton>加<br />载项</StackButton>
      </Group>
      <Group label="保存" w={81}>
        <StackButton>保存到<br />百度网盘</StackButton>
      </Group>
      <CollapseButton aria-label="折叠功能区">
        <Icon w={12} h={8} s="#555" sw={1.5}><path d="M1 7l5-5 5 5" /></Icon>
      </CollapseButton>
    </Ribbon>
  );
}

function Document() {
  return (
    <Paper>
      <CropMarks><CropMark /><CropMark $right /></CropMarks>
      {bodyLines.map((parts, i) => (
        <Line key={i}>
          {parts.map((part, j) => (
            typeof part === "number" ? <Gap key={j} $w={part} /> : <span key={j}>{part}</span>
          ))}
          <Return />
        </Line>
      ))}
      {listLines.map((text, i) => (
        <Line key={text}>
          <Marker>{i + 1}、</Marker>
          <span>{text}</span>
          <Return />
        </Line>
      ))}
      <Caret width="9" height="17" viewBox="0 0 9 17" fill="none" stroke="#555" aria-hidden="true">
        <path d="M1 .5h3v16H1M8 .5H5M4.500 1v15M8 16.500H5" />
      </Caret>
    </Paper>
  );
}

function Status() {
  return (
    <StatusBar>
      <PageCount>第 5 页，共 5 页</PageCount>
      <StatusItem>3727 个字</StatusItem>
      <StatusItem aria-label="校对"><Proof /></StatusItem>
      <StatusItem $gap={24}>简体中文(中国大陆)</StatusItem>
      <StatusItem><Access />辅助功能: 不可用</StatusItem>
      <Views>
        <ViewButton aria-label="阅读视图"><ReadView /></ViewButton>
        <ViewButton aria-label="页面视图" $on><PrintView /></ViewButton>
        <ViewButton aria-label="Web 版式"><WebView /></ViewButton>
      </Views>
      <ZoomBox>
        <button aria-label="缩小"><Icon w={10} s="#444" sw={1.2}><path d="M0 5h10" /></Icon></button>
        <ZoomSlider type="range" aria-label="缩放" defaultValue={64} />
        <button aria-label="放大"><Icon w={10} s="#444" sw={1.2}><path d="M0 5h10M5 0v10" /></Icon></button>
        <ZoomValue>210%</ZoomValue>
      </ZoomBox>
    </StatusBar>
  );
}

function Tasks() {
  return (
    <TaskBar>
      <TrayButton $w={34} aria-label="开始"><Windows /></TrayButton>
      <SearchBox>
        <SearchGlass />
        <input type="search" placeholder="搜索" aria-label="搜索" />
        <Cheetah />
      </SearchBox>
      {apps.map(app => (
        <AppButton key={app.name} aria-label={app.name} $open={app.open} $on={app.on}>{app.icon}</AppButton>
      ))}
      <Tray>
        <Weather><Moon /><span>13°C<br />局部多云</span></Weather>
        <TrayButton $w={50}><Bars /></TrayButton>
        <TrayButton $w={46}><Icon w={14} h={9} s="#222" sw={2}><path d="M1 8l6-6 6 6" /></Icon></TrayButton>
        <TrayButton $w={26}><Sync /></TrayButton>
        <TrayButton $w={50}>中</TrayButton>
        <TrayButton $w={28}><Wifi /></TrayButton>
        <TrayButton $w={28}><Speaker /></TrayButton>
        <TrayButton $w={28}><Battery /></TrayButton>
        <Clock>19:08 周三<br />2024/12/4</Clock>
        <TrayButton $w={20} aria-label="通知"><Bell /></TrayButton>
      </Tray>
    </TaskBar>
  );
}

function SystemMonitor() {
  return (
    <Monitor>
      <Stats>
        <div>
          <Icon w={9} h={10} s="#1cae50" sw={1.6}><path d="M4.500 0v9M1 5.500L4.500 9 8 5.500" /></Icon>
          <span>5.2K/s</span>
        </div>
        CPU <b>77°C</b>
      </Stats>
      <Icon w={24} h={26}>
        <circle cx="11" cy="13" r="10" fill="#2f8cf0" /><path d="M11 8v10M6 13h10" stroke="#fff" strokeWidth="2.500" /><circle cx="20" cy="7" r="4" fill="#f0552c" />
      </Icon>
      <MonitorRing>
        <Ring />
        <MonitorValue>54<small>%</small></MonitorValue>
      </MonitorRing>
    </Monitor>
  );
}

export default function App() {
  return (
    <Page>
      <GlobalStyle />
      <Call>
        <Screen>
          <TitleBar />
          <RibbonBar />
          <Document />
          <ScrollStrip />
          <Status />
          <Tasks />
          <SystemMonitor />
        </Screen>
        <Side>
          <CameraDot />
          <Participant>
            <Avatar>
              &lt;!Altzin&gt;
              <AvatarMic><Mic w={36} h={42} /></AvatarMic>
            </Avatar>
            <Name>Altzin</Name>
          </Participant>
          <MicButton aria-label="麦克风"><BigMic /></MicButton>
        </Side>
        <ShareBanner>
          <HostBadge><Person /></HostBadge>
          <Mic w={36} h={42} />
          <ShareText>廿五的屏幕共享</ShareText>
        </ShareBanner>
      </Call>
      <NavBar><NavHandle /></NavBar>
    </Page>
  );
}
